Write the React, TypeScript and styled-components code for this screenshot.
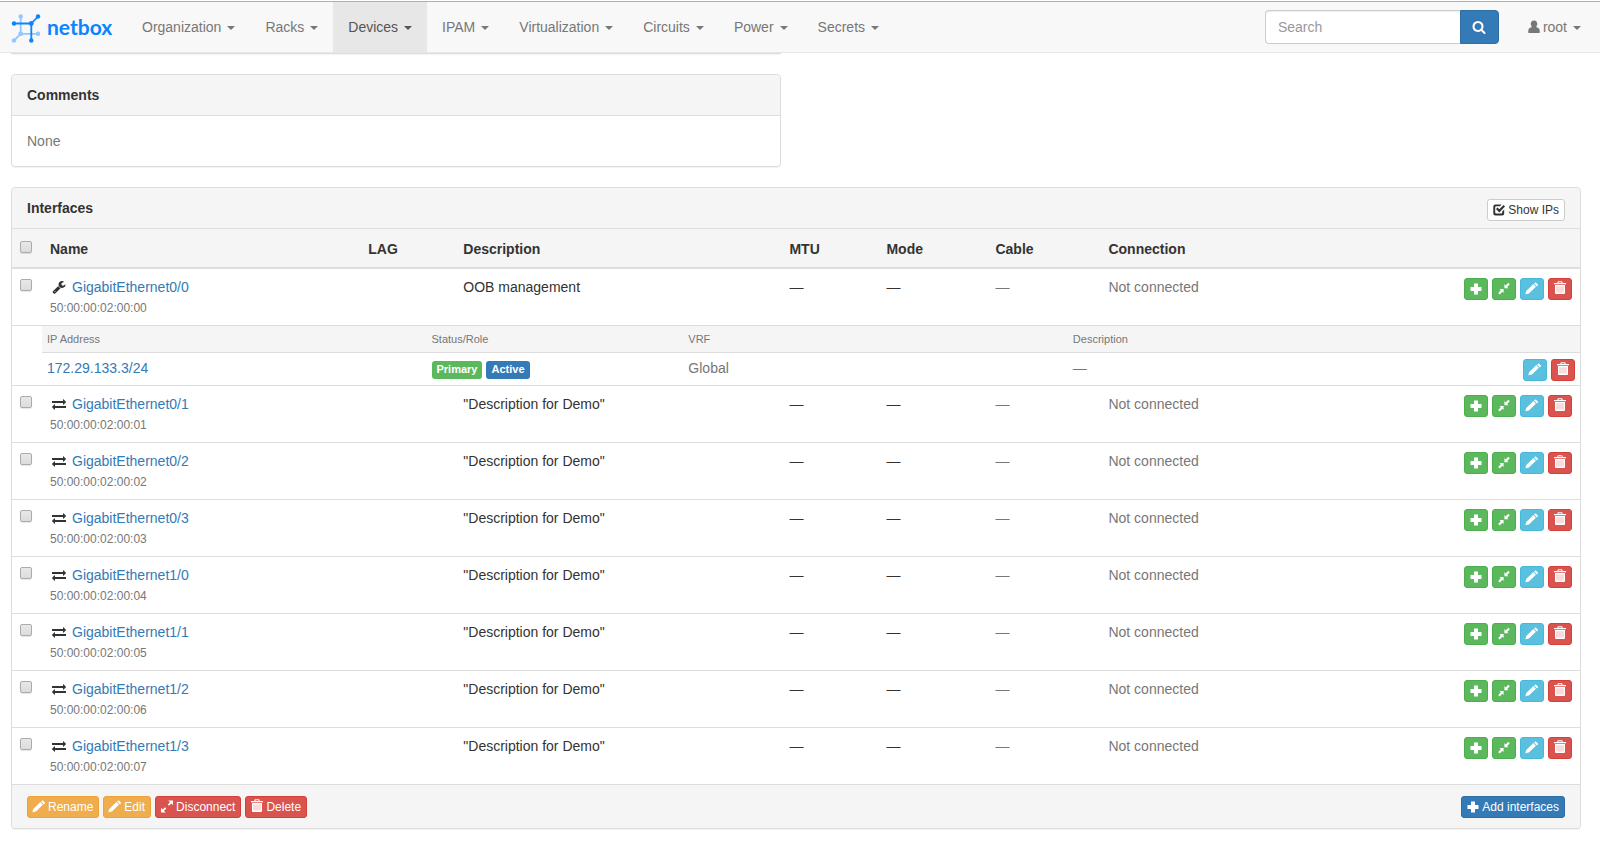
import React, { ReactNode } from 'react';
import styled, { createGlobalStyle } from 'styled-components';

const GlobalStyle = createGlobalStyle`
  *, *::before, *::after { box-sizing: border-box; }
  body {
    margin: 0;
    background: #fff;
    color: #333;
    font-family: "Liberation Sans", Arial, Helvetica, sans-serif;
    font-size: 14px;
    line-height: 20px;
  }
  a { color: #337ab7; text-decoration: none; }
`;

/* ---------- icons ---------- */

const Svg = styled.svg<{ $size: number; $gap?: number }>`
  flex: none;
  display: block;
  overflow: visible;
  width: ${(p) => p.$size}px;
  height: ${(p) => p.$size}px;
  margin-right: ${(p) => p.$gap ?? 0}px;
  fill: currentColor;
`;

const glyphs = {
  plus: 'M4 .5h4V4h3.5v4H8v3.500H4V8H.5V4H4z',
  pencil:
    'M-.7 11.300L.3 7.900 7.400 1.100 9.900 3.700 2.900 10.400zM8.100.4L8.900-.3q.6-.5 1.200 0l1.700 1.700q.5.6 0 1.200l-.9.800z',
  trash:
    'M0 0h3.400V-.7q0-1 1-1h3.200q1 0 1 1V0H12v1.200H0zM4.500 0h3V-.7h-3zM1 2h10v8q0 1-1 1H2q-1 0-1-1zM2.800 3.300v6.200h.4v-6.200zM4.800 3.300v6.200h.4v-6.200zM6.800 3.300v6.200h.4v-6.200zM8.800 3.300v6.200h.4v-6.200z',
  shrink:
    'M6.400 5.200V1.100l1.300 1.300L10.300-.2l1.500 1.500L9.200 3.900l1.300 1.300zM5.600 6v4.100L4.300 8.800 1.700 11.400.2 9.900 2.800 7.300 1.500 6z',
  expand:
    'M12-.5v4.700L10.300 2.500 8 4.800 6.700 3.500 9 1.200 7.300-.5zM0 11.500V6.800L1.700 8.500 4 6.200 5.300 7.500 3 9.800 4.700 11.500z',
  check:
    'M2.400.4h6.300L6.900 2.300H3.200q-1 0-1 1v5.200q0 1 1 1h5q1 0 1-1V7.500l2-2v3.900q0 2-2 2H2.400q-2.100 0-2.100-2V2.500Q.3.400 2.400.4zM3 5l1.500-1.500 1.800 1.700L10.500.9 12 2.400 6.300 8.400z',
};

const awesome = {
  wrench:
    'M448 1472q0-26-19-45t-45-19-45 19-19 45 19 45 45 19 45-19 19-45zm644-420l-682 682q-37 37-90 37-52 0-91-37l-106-108q-38-36-38-90 0-53 38-91l681-681q39 98 114.5 173.5t173.5 114.5zm634-435q0 39-23 106-47 134-164.5 217.5t-258.5 83.5q-185 0-316.5-131.5t-131.5-316.5 131.5-316.5 316.5-131.5q58 0 121.5 16.5t107.5 46.5q16 11 16 28t-16 28l-293 169v224l193 107q5-3 79-48.5t135.5-81 70.5-35.5q15 0 23.5 10t8.5 25z',
  exchange:
    'M1792 1184v192q0 13-9.5 22.5t-22.5 9.5h-1376v192q0 13-9.5 22.5t-22.5 9.5q-12 0-24-10l-319-320q-9-9-9-22 0-14 9-23l320-320q9-9 23-9 13 0 22.5 9.5t9.5 22.5v192h1376q13 0 22.5 9.5t9.5 22.5zm0-544q0 14-9 23l-320 320q-9 9-23 9-13 0-22.5-9.5t-9.5-22.5v-192h-1376q-13 0-22.5-9.5t-9.5-22.5v-192q0-13 9.5-22.5t22.5-9.5h1376v-192q0-14 9-23t23-9q12 0 24 10l319 319q9 9 9 23z',
  user: 'M896 60q-230 0-340 150-90 130-70 330 20 230 150 370-40 40-230 90-190 70-220 250-30 150-30 330 0 80 80 80h1320q80 0 80-80 0-180-30-330-30-180-220-250-190-50-230-90 130-140 150-370 20-200-70-330-110-150-340-150z',
  search:
    'M1216 832q0-185-131.5-316.5t-316.5-131.5-316.5 131.5-131.5 316.500 131.500 316.500 316.500 131.500 316.500-131.500 131.500-316.500zm512 832q0 52-38 90t-90 38q-54 0-90-38l-343-342q-179 124-399 124-143 0-273.5-55.5t-225-150-150-225-55.5-273.5 55.5-273.5 150-225 225-150 273.5-55.5 273.5 55.5 225 150 150 225 55.5 273.5q0 220-124 399l343 343q37 37 37 90z',
};

const Glyph = ({ name, gap }: { name: keyof typeof glyphs; gap?: number }) => (
  <Svg $size={12} $gap={gap} viewBox="0 0 12 12" aria-hidden="true">
    <path fillRule="evenodd" d={glyphs[name]} />
  </Svg>
);

const Awesome = ({ name, gap }: { name: keyof typeof awesome; gap?: number }) => (
  <Svg $size={14} $gap={gap} viewBox="0 0 1792 1792" aria-hidden="true">
    <path d={awesome[name]} />
  </Svg>
);

/* ---------- navigation bar ---------- */

const Header = styled.header`
  display: flex;
  align-items: stretch;
  height: 52px;
  margin-top: 1px;
  padding: 0 4px 0 11px;
  background: #f8f8f8;
  border-top: 1px solid #b0b0b0;
  border-bottom: 1px solid #e7e7e7;
`;

const Brand = styled.a`
  display: flex;
  align-items: center;
  width: 116px;
  color: #0a84ff;
  font-family: Lato, "Open Sans", sans-serif;
  font-size: 21px;
  font-weight: 700;
`;

const LogoMark = styled.svg`
  width: 30px;
  height: 30px;
  margin: 4px 6px 0 0;
`;

const Nav = styled.nav`
  display: flex;
  flex: 1;
`;

const NavLink = styled.a<{ $active?: boolean }>`
  display: flex;
  align-items: center;
  padding: 0 15px;
  color: ${(p) => (p.$active ? '#555' : '#777')};
  background: ${(p) => (p.$active ? '#e7e7e7' : 'transparent')};

  &::after {
    content: "";
    margin: 2px 0 0 6px;
    border-top: 4px solid;
    border-left: 4px solid transparent;
    border-right: 4px solid transparent;
  }
`;

const SearchForm = styled.form`
  display: flex;
  align-items: center;
  padding-right: 13px;
`;

const SearchInput = styled.input`
  width: 195px;
  height: 34px;
  padding: 6px 12px;
  border: 1px solid #ccc;
  border-right: 0;
  border-radius: 4px 0 0 4px;
  background: #fff;
  box-shadow: inset 0 1px 1px rgba(0, 0, 0, 0.075);
  font: inherit;
  &::placeholder { color: #999; opacity: 1; }
`;

const SearchButton = styled.button`
  display: flex;
  align-items: center;
  justify-content: center;
  width: 39px;
  height: 34px;
  padding: 0;
  border: 1px solid #2e6da4;
  border-radius: 0 4px 4px 0;
  background: #337ab7;
  color: #fff;
`;

/* ---------- panels ---------- */

const Page = styled.main`
  padding: 0 19px 20px 11px;
`;

const Columns = styled.div`
  display: grid;
  grid-template-columns: 1fr 1fr;
  column-gap: 30px;
`;

const PreviousPanel = styled.div`
  height: 1px;
  margin-bottom: 20px;
  border-bottom: 1px solid #ddd;
  border-radius: 0 0 4px 4px;
  box-shadow: 0 1px 1px rgba(0, 0, 0, 0.05);
`;

const Panel = styled.section`
  margin-bottom: 20px;
  border: 1px solid #ddd;
  border-radius: 4px;
  background: #fff;
  box-shadow: 0 1px 1px rgba(0, 0, 0, 0.05);
  overflow: hidden;
`;

const PanelHeading = styled.div`
  display: flex;
  align-items: flex-start;
  justify-content: space-between;
  height: 41px;
  padding: 0 15px;
  border-bottom: 1px solid #ddd;
  background: #f5f5f5;
`;

const PanelTitle = styled.h2`
  margin: 10px 0;
  font-size: 14px;
  line-height: 20px;
`;

const ToggleSlot = styled.div`
  padding-top: 11px;
`;

const PanelBody = styled.div`
  padding: 15px;
  color: #777;
`;

const PanelFooter = styled.div`
  display: flex;
  gap: 4px;
  padding: 11px 15px 10px;
  border-top: 1px solid #ddd;
  background: #f5f5f5;
`;

const Spacer = styled.div`
  flex: 1;
`;

/* ---------- buttons and labels ---------- */

const tones = {
  plain: { bg: '#fff', line: '#ccc', ink: '#333' },
  success: { bg: '#5cb85c', line: '#4cae4c', ink: '#fff' },
  info: { bg: '#5bc0de', line: '#46b8da', ink: '#fff' },
  danger: { bg: '#d9534f', line: '#d43f3a', ink: '#fff' },
  warning: { bg: '#f0ad4e', line: '#eea236', ink: '#fff' },
  primary: { bg: '#337ab7', line: '#2e6da4', ink: '#fff' },
};

const SmallButton = styled.button<{ $tone: keyof typeof tones }>`
  display: flex;
  align-items: center;
  height: 22px;
  padding: 0 5px;
  border: 1px solid ${(p) => tones[p.$tone].line};
  border-radius: 3px;
  background: ${(p) => tones[p.$tone].bg};
  color: ${(p) => tones[p.$tone].ink};
  font: inherit;
  font-size: 12px;
  line-height: 18px;
  white-space: nowrap;
`;

const Actions = styled.div`
  display: flex;
  justify-content: flex-end;
  gap: 4px;
  padding-top: 1px;
`;

const Labels = styled.div`
  display: flex;
  gap: 4px;
  padding-top: 3px;
`;

const Label = styled.span<{ $tone: keyof typeof tones }>`
  height: 18px;
  padding: 0 5px;
  border-radius: 3px;
  background: ${(p) => tones[p.$tone].bg};
  color: #fff;
  font-size: 11px;
  font-weight: bold;
  line-height: 17px;
`;

/* ---------- interface table ---------- */

const Table = styled.table`
  width: 100%;
  table-layout: fixed;
  border-collapse: separate;
  border-spacing: 0;
`;

const Col = styled.col<{ $width?: string }>`
  width: ${(p) => p.$width ?? 'auto'};
`;

const HeadCell = styled.th`
  height: 40px;
  padding: 8px;
  border-bottom: 2px solid #ddd;
  background: #f5f5f5;
  text-align: left;
  vertical-align: bottom;
`;

const Row = styled.tr<{ $first?: boolean }>`
  & > td { border-top: ${(p) => (p.$first ? '0' : '1px solid #ddd')}; }
`;

const Cell = styled.td<{ $muted?: boolean }>`
  padding: 8px;
  color: ${(p) => (p.$muted ? '#777' : '#333')};
  vertical-align: top;
`;

const NestedCell = styled.td`
  padding: 0;
`;

const Tick = styled.input`
  appearance: none;
  display: block;
  width: 12px;
  height: 12px;
  margin: 2px 0 0;
  border: 1px solid #ababab;
  border-radius: 2px;
  background: linear-gradient(#e8e8e8, #dcdcdc);
  box-shadow: 0 1px 1px rgba(0, 0, 0, 0.1);
`;

const HeadTick = styled(Tick)`
  margin-bottom: 6px;
`;

const NameLine = styled.div`
  display: flex;
  align-items: center;
  padding-left: 2px;
`;

const Mac = styled.div`
  padding-top: 2px;
  color: #777;
  font-size: 12px;
  line-height: 18px;
`;

const AddressHead = styled.th`
  height: 27px;
  padding: 0 5px;
  border-bottom: 1px solid #ddd;
  background: #f5f5f5;
  color: #777;
  font-size: 11px;
  font-weight: normal;
  text-align: left;
`;

const AddressCell = styled.td`
  height: 32px;
  padding: 5px 5px 4px;
  color: #777;
  vertical-align: top;
`;

/* ---------- content ---------- */

const menus = ['Organization', 'Racks', 'Devices', 'IPAM', 'Virtualization', 'Circuits', 'Power', 'Secrets'];

const interfaces = ['0/0', '0/1', '0/2', '0/3', '1/0', '1/1', '1/2', '1/3'].map((slot, i) => ({
  name: `GigabitEthernet${slot}`,
  mac: `50:00:00:02:00:0${i}`,
  description: i === 0 ? 'OOB management' : '"Description for Demo"',
  management: i === 0,
}));

const IconButton = ({ tone, icon, title }: { tone: keyof typeof tones; icon: keyof typeof glyphs; title: string }) => (
  <SmallButton type="button" $tone={tone} aria-label={title}>
    <Glyph name={icon} />
  </SmallButton>
);

const TextButton = ({ tone, icon, children }: { tone: keyof typeof tones; icon: keyof typeof glyphs; children: ReactNode }) => (
  <SmallButton type="button" $tone={tone}>
    <Glyph name={icon} gap={3} />
    {children}
  </SmallButton>
);

const Logo = () => (
  <LogoMark viewBox="0 0 30 30" aria-hidden="true">
    <g fill="#90c8ff">
      <path d="M9.700 2.500v17.300H27M9.700 19.800L3 26.500" fill="none" stroke="#90c8ff" strokeWidth="1.800" />
      <circle cx="9.700" cy="2.500" r="2.200" />
      <circle cx="9.700" cy="19.800" r="2.400" />
      <circle cx="27" cy="19.800" r="2.200" />
      <circle cx="3" cy="26.500" r="2.200" />
    </g>
    <g fill="#0a84ff">
      <path d="M3 9.500h17.300v17M20.300 9.500L27 2.500" fill="none" stroke="#0a84ff" strokeWidth="1.800" />
      <circle cx="3" cy="9.500" r="2.200" />
      <circle cx="20.300" cy="9.500" r="2.400" />
      <circle cx="27" cy="2.500" r="2.200" />
      <circle cx="20.300" cy="26.500" r="2.200" />
    </g>
  </LogoMark>
);

const AddressTable = () => (
  <Table>
    <colgroup>
      <Col $width="25%" />
      <Col $width="16.7%" />
      <Col $width="25%" />
      <Col />
      <Col $width="80px" />
    </colgroup>
    <thead>
      <tr>
        <AddressHead>IP Address</AddressHead>
        <AddressHead>Status/Role</AddressHead>
        <AddressHead>VRF</AddressHead>
        <AddressHead>Description</AddressHead>
        <AddressHead />
      </tr>
    </thead>
    <tbody>
      <tr>
        <AddressCell><a href="#address">172.29.133.3/24</a></AddressCell>
        <AddressCell>
          <Labels>
            <Label $tone="success">Primary</Label>
            <Label $tone="primary">Active</Label>
          </Labels>
        </AddressCell>
        <AddressCell>Global</AddressCell>
        <AddressCell>—</AddressCell>
        <AddressCell>
          <Actions>
            <IconButton tone="info" icon="pencil" title="Edit address" />
            <IconButton tone="danger" icon="trash" title="Delete address" />
          </Actions>
        </AddressCell>
      </tr>
    </tbody>
  </Table>
);

export default function App() {
  return (
    <>
      <GlobalStyle />
      <Header>
        <Brand href="#home">
          <Logo />
          netbox
        </Brand>
        <Nav>
          {menus.map((menu) => (
            <NavLink key={menu} href={`#${menu.toLowerCase()}`} $active={menu === 'Devices'}>
              {menu}
            </NavLink>
          ))}
        </Nav>
        <SearchForm role="search">
          <SearchInput type="text" placeholder="Search" aria-label="Search" />
          <SearchButton type="submit" aria-label="Submit search">
            <Awesome name="search" />
          </SearchButton>
        </SearchForm>
        <NavLink href="#user">
          <Awesome name="user" gap={2} />
          root
        </NavLink>
      </Header>

      <Page>
        <Columns>
          <div>
            <PreviousPanel />
            <Panel>
              <PanelHeading>
                <PanelTitle>Comments</PanelTitle>
              </PanelHeading>
              <PanelBody>None</PanelBody>
            </Panel>
          </div>
        </Columns>

        <Panel>
          <PanelHeading>
            <PanelTitle>Interfaces</PanelTitle>
            <ToggleSlot>
              <TextButton tone="plain" icon="check">Show IPs</TextButton>
            </ToggleSlot>
          </PanelHeading>
          <Table>
            <colgroup>
              <Col $width="30px" />
              <Col $width="20.3%" />
              <Col $width="95px" />
              <Col $width="20.8%" />
              <Col $width="97px" />
              <Col $width="109px" />
              <Col $width="113px" />
              <Col />
              <Col $width="130px" />
            </colgroup>
            <thead>
              <tr>
                <HeadCell><HeadTick type="checkbox" aria-label="Select all interfaces" /></HeadCell>
                <HeadCell>Name</HeadCell>
                <HeadCell>LAG</HeadCell>
                <HeadCell>Description</HeadCell>
                <HeadCell>MTU</HeadCell>
                <HeadCell>Mode</HeadCell>
                <HeadCell>Cable</HeadCell>
                <HeadCell>Connection</HeadCell>
                <HeadCell />
              </tr>
            </thead>
            <tbody>
              {interfaces.map((item, i) => (
                <React.Fragment key={item.name}>
                  <Row $first={i === 0}>
                    <Cell><Tick type="checkbox" aria-label={`Select ${item.name}`} /></Cell>
                    <Cell>
                      <NameLine>
                        <Awesome name={item.management ? 'wrench' : 'exchange'} gap={6} />
                        <a href="#interface">{item.name}</a>
                      </NameLine>
                      <Mac>{item.mac}</Mac>
                    </Cell>
                    <Cell />
                    <Cell>{item.description}</Cell>
                    <Cell>—</Cell>
                    <Cell>—</Cell>
                    <Cell $muted>—</Cell>
                    <Cell $muted>Not connected</Cell>
                    <Cell>
                      <Actions>
                        <IconButton tone="success" icon="plus" title="Add IP address" />
                        <IconButton tone="success" icon="shrink" title="Connect" />
                        <IconButton tone="info" icon="pencil" title="Edit interface" />
                        <IconButton tone="danger" icon="trash" title="Delete interface" />
                      </Actions>
                    </Cell>
                  </Row>
                  {item.management && (
                    <Row>
                      <NestedCell />
                      <NestedCell colSpan={8}><AddressTable /></NestedCell>
                    </Row>
                  )}
                </React.Fragment>
              ))}
            </tbody>
          </Table>
          <PanelFooter>
            <TextButton tone="warning" icon="pencil">Rename</TextButton>
            <TextButton tone="warning" icon="pencil">Edit</TextButton>
            <TextButton tone="danger" icon="expand">Disconnect</TextButton>
            <TextButton tone="danger" icon="trash">Delete</TextButton>
            <Spacer />
            <TextButton tone="primary" icon="plus">Add interfaces</TextButton>
          </PanelFooter>
        </Panel>
      </Page>
    </>
  );
}
